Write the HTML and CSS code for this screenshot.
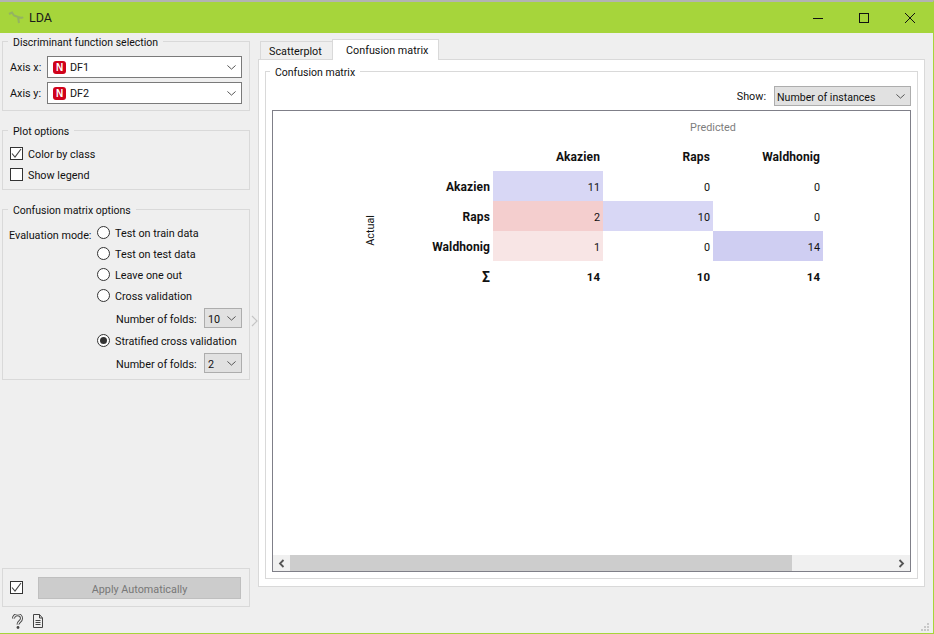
FILE: index.html

```html
<!doctype html>
<html lang="en">

<head>
  <meta charset="utf-8">
  <title>LDA</title>
  <link rel="stylesheet" href="styles.css">
</head>

<body>
  <div class="window">
    <header class="titlebar">
      <svg class="app-icon" width="16" height="14" viewBox="0 0 16 14"><path d="M1 3l3-1.500 2 3 4 1.500 4 1M10 6l1 6M14 7l1-1" fill="none" stroke="#8fa870" stroke-width="2"/></svg>
      <span class="title">LDA</span>
      <svg class="win-btn btn-min" width="12" height="12" viewBox="0 0 12 12"><path d="M1 6.500h10" stroke="#111" fill="none"/></svg>
      <svg class="win-btn btn-max" width="12" height="12" viewBox="0 0 12 12"><rect x="1.500" y="1.500" width="9" height="9" stroke="#111" fill="none"/></svg>
      <svg class="win-btn btn-close" width="12" height="12" viewBox="0 0 12 12"><path d="M1 1l10 10M11 1L1 11" stroke="#111" fill="none"/></svg>
    </header>

    <div class="body">
      <aside class="controls">
        <section class="group group-axes">
          <span class="legend">Discriminant function selection</span>
          <div class="axis-row">
            <span class="axis-label">Axis x:</span>
            <div class="combo combo-white"><span class="var-n">N</span><span>DF1</span><svg class="chev" width="9" height="5" viewBox="0 0 11 6"><path d="M.5.500l5 4.500 5-4.500" fill="none" stroke="#555" stroke-width="1.200"/></svg></div>
          </div>
          <div class="axis-row">
            <span class="axis-label">Axis y:</span>
            <div class="combo combo-white"><span class="var-n">N</span><span>DF2</span><svg class="chev" width="9" height="5" viewBox="0 0 11 6"><path d="M.5.500l5 4.500 5-4.500" fill="none" stroke="#555" stroke-width="1.200"/></svg></div>
          </div>
        </section>

        <section class="group group-plot">
          <span class="legend">Plot options</span>
          <div class="check-row"><span class="check"><svg width="11" height="11" viewBox="0 0 11 11"><path d="M1 5.500l3 3.500 6-8" fill="none" stroke="#444" stroke-width="1.100"/></svg></span>Color by class</div>
          <div class="check-row"><span class="check"></span>Show legend</div>
        </section>

        <section class="group group-matrix">
          <span class="legend">Confusion matrix options</span>
          <div class="eval">
            <span class="eval-label">Evaluation mode:</span>
            <div class="eval-options">
              <div class="radio-row"><span class="radio"></span>Test on train data</div>
              <div class="radio-row"><span class="radio"></span>Test on test data</div>
              <div class="radio-row"><span class="radio"></span>Leave one out</div>
              <div class="radio-row"><span class="radio"></span>Cross validation</div>
              <div class="folds">Number of folds:<div class="combo combo-gray combo-small"><span>10</span><svg class="chev" width="9" height="5" viewBox="0 0 11 6"><path d="M.5.500l5 4.500 5-4.500" fill="none" stroke="#555" stroke-width="1.200"/></svg></div></div>
              <div class="radio-row"><span class="radio radio-on"></span>Stratified cross validation</div>
              <div class="folds">Number of folds:<div class="combo combo-gray combo-small"><span>2</span><svg class="chev" width="9" height="5" viewBox="0 0 11 6"><path d="M.5.500l5 4.500 5-4.500" fill="none" stroke="#555" stroke-width="1.200"/></svg></div></div>
            </div>
          </div>
        </section>

        <div class="spacer"></div>

        <div class="apply-box">
          <span class="check"><svg width="11" height="11" viewBox="0 0 11 11"><path d="M1 5.500l3 3.500 6-8" fill="none" stroke="#444" stroke-width="1.100"/></svg></span>
          <div class="apply-btn">Apply Automatically</div>
        </div>

        <div class="status">
          <svg width="11" height="15" viewBox="0 0 11 15"><path d="M1.500 4.500c0-5 8-5 8 0 0 3-3.500 3-3.500 6" fill="none" stroke="#444" stroke-width="3"/><path d="M1.500 4.500c0-5 8-5 8 0 0 3-3.500 3-3.500 6" fill="none" stroke="#efefef" stroke-width="1.200"/><circle cx="6" cy="13.500" r="1.400" fill="#444"/></svg>
          <svg width="12" height="14" viewBox="0 0 12 14"><path d="M1.500.500h6l3 3.500v9.500h-9zM7.500.500v3.500h3M3.500 6.500h5M3.500 8.500h5M3.500 10.500h5" fill="none" stroke="#444"/></svg>
        </div>
      </aside>

      <div class="splitter"><svg width="7" height="12" viewBox="0 0 7 12"><path d="M1 1l5 5-5 5" fill="none" stroke="#c4c4c4" stroke-width="1.200"/></svg></div>

      <main class="main">
        <div class="tabs">
          <div class="tab">Scatterplot</div>
          <div class="tab tab-active">Confusion matrix</div>
        </div>
        <div class="tab-pane">
          <section class="inner-group">
            <span class="legend">Confusion matrix</span>
            <div class="show-row">
              <span>Show:</span>
              <div class="combo combo-gray combo-show"><span>Number of instances</span><svg class="chev" width="9" height="5" viewBox="0 0 11 6"><path d="M.5.500l5 4.500 5-4.500" fill="none" stroke="#555" stroke-width="1.200"/></svg></div>
            </div>
            <div class="view">
              <div class="matrix">
                <div class="predicted">Predicted</div>
                <div class="actual"><span>Actual</span></div>

                <div class="head head-first">Akazien</div>
                <div class="head">Raps</div>
                <div class="head">Waldhonig</div>

                <div class="row-head">Akazien</div>
                <div class="cell blue-1">11</div>
                <div class="cell">0</div>
                <div class="cell">0</div>

                <div class="row-head">Raps</div>
                <div class="cell red-2">2</div>
                <div class="cell blue-1">10</div>
                <div class="cell">0</div>

                <div class="row-head">Waldhonig</div>
                <div class="cell red-1">1</div>
                <div class="cell">0</div>
                <div class="cell blue-2">14</div>

                <div class="row-head sigma">Σ</div>
                <div class="cell total">14</div>
                <div class="cell total">10</div>
                <div class="cell total">14</div>
              </div>

              <div class="hscroll">
                <svg width="7" height="9" viewBox="0 0 7 9"><path d="M5.500 1l-3.500 3.500 3.500 3.500" fill="none" stroke="#555" stroke-width="1.800"/></svg>
                <div class="track"><div class="thumb"></div></div>
                <svg width="7" height="9" viewBox="0 0 7 9"><path d="M1.500 1l3.500 3.500-3.500 3.500" fill="none" stroke="#555" stroke-width="1.800"/></svg>
              </div>
            </div>
          </section>
        </div>
      </main>
    </div>

    <svg class="grip" width="9" height="9" viewBox="0 0 9 9"><path d="M6 0h2v2H6zM3 3h2v2H3zM6 3h2v2H6zM0 6h2v2H0zM3 6h2v2H3zM6 6h2v2H6z" fill="#c8c8c8"/></svg>
  </div>
</body>

</html>
```

FILE: styles.css

```css
html, body { margin:0; padding:0; height:100%; }
body { font-family:Roboto,"Open Sans",sans-serif; font-size:10.800px; color:#111; background:#efefef; overflow:hidden; }
* { box-sizing:border-box; }

.window { width:934px; height:634px; display:flex; flex-direction:column; position:relative; background:#efefef; border-top:2px solid #b3b3b3; border-right:1px solid #a6d53b; border-bottom:1px solid #a6d53b; }
.grip { position:absolute; right:3px; bottom:1px; }

/* title bar */
.titlebar { height:31px; flex:none; background:#a6d53b; display:flex; align-items:center; padding-left:8px; }
.app-icon { opacity:.75; margin-right:5px; }
.title { font-size:12.500px; color:#1a1a1a; flex:1; }
.win-btn { flex:none; }
.btn-min { margin-right:34px; }
.btn-max { margin-right:34px; }
.btn-close { margin-right:17px; }

.body { flex:1; display:flex; min-height:0; }

/* left column */
.controls { width:250px; flex:none; padding:8px 0 0 2px; display:flex; flex-direction:column; }
.group { border:1px solid #d9d9d9; width:248px; position:relative; flex:none; }
.legend { position:absolute; top:-6px; left:5px; padding:0 5px; font-size:10.500px; line-height:14px; background:#efefef; white-space:nowrap; }

.group-axes { height:70px; padding:14px 0 0 7px; }
.axis-row { display:flex; align-items:center; height:22px; margin-bottom:4px; }
.axis-label { width:37px; flex:none; }
.combo { display:flex; align-items:center; border:1px solid #7a7a7a; position:relative; }
.combo-white { background:#fff; width:195px; height:22px; padding-left:5px; }
.combo-gray { background:#e1e1e1; border-color:#adadad; padding:2px 0 0 3px; }
.combo-small { width:38px; height:20px; }
.combo-show { width:137px; height:20px; padding-left:2px; font-size:10.600px; }
.chev { position:absolute; right:5px; top:50%; margin-top:-2px; }
.var-n { width:13px; height:13px; background:#d0021b; color:#fff; border-radius:3px; font-family:"Liberation Sans",sans-serif; font-size:10px; font-weight:bold; text-align:center; line-height:13px; margin-right:4px; }

.group-plot { height:60px; margin-top:19px; padding:12px 0 0 7px; }
.check-row { display:flex; align-items:center; height:21px; padding-top:2px; }
.check { width:13px; height:13px; border:1px solid #333; background:#fff; flex:none; margin-right:5px; display:flex; align-items:center; justify-content:center; }
.check-row .check { margin-bottom:2px; }

.group-matrix { height:171px; margin-top:19px; padding:12px 0 0 6px; }
.eval { display:flex; }
.eval-label { width:88px; flex:none; padding-top:7px; line-height:14px; }
.eval-options { flex:1; }
.radio-row { display:flex; align-items:center; height:21px; padding-top:2px; }
.radio { width:13px; height:13px; border:1px solid #333; border-radius:50%; background:#fff; margin:0 5px 2px 0; flex:none; position:relative; }
.radio-on::after { content:""; position:absolute; left:2px; top:2px; width:7px; height:7px; border-radius:50%; background:#333; }
.folds { display:flex; align-items:center; justify-content:space-between; height:24px; padding:2px 0 0 19px; width:145px; }
.folds .combo { margin-bottom:2px; }
.spacer { flex:1; }

.apply-box { width:248px; height:39px; flex:none; border:1px solid #d9d9d9; display:flex; align-items:center; padding-left:7px; }
.apply-box .check { margin-right:15px; }
.apply-btn { width:203px; height:22px; background:#cccccc; border:1px solid #bfbfbf; color:#777; text-align:center; line-height:23px; }
.status { height:26px; flex:none; display:flex; align-items:center; padding:2px 0 0 10px; gap:9px; }

.splitter { width:8px; flex:none; display:flex; align-items:center; justify-content:center; padding-bottom:24px; }

/* right column */
.main { flex:1; display:flex; flex-direction:column; padding:6px 8px 46px 0; min-width:0; }
.tabs { display:flex; height:20px; flex:none; padding-left:2px; }
.tab { width:73px; height:18px; margin-top:2px; padding-left:8px; border:1px solid #d9d9d9; border-bottom:none; background:#efefef; line-height:19px; white-space:nowrap; }
.tab-active { width:107px; height:21px; margin-top:0; margin-left:-1px; padding-left:13px; background:#fff; position:relative; z-index:1; line-height:21px; }
.tab-pane { flex:1; display:flex; background:#fff; border:1px solid #d9d9d9; padding:11px 6px 7px 6px; min-height:0; }
.inner-group { flex:1; position:relative; border:1px solid #d9d9d9; padding:14px 6px 0 6px; min-width:0; }
.inner-group .legend { left:4px; background:#fff; }

.show-row { display:flex; justify-content:flex-end; align-items:center; gap:8px; height:20px; }
.view { height:462px; margin-top:4px; border:1px solid #7f7f88; background:#fff; display:flex; flex-direction:column; }

/* matrix */
.matrix { flex:1; display:grid; grid-template-columns:112px 108px 110px 110px 110px; grid-template-rows:30px 30px 30px 30px 30px 30px; align-content:start; justify-content:start; }
.predicted { grid-column:3 / 6; grid-row:1; padding:10px 0 0 110px; text-align:center; color:#7d7d7d; line-height:14px; }
.actual { grid-column:1; grid-row:3 / 7; display:flex; align-items:center; justify-content:flex-end; padding:0 8px 2px 0; }
.actual span { writing-mode:vertical-rl; transform:rotate(180deg); }
.head, .row-head, .cell { display:flex; align-items:center; justify-content:flex-end; padding:2px 3px 0 0; }
.head, .row-head { font-weight:bold; font-size:12px; letter-spacing:.1px; }
.head-first { grid-column:3; }
.row-head { grid-column:2; }
.sigma { font-size:14px; }
.total { font-weight:bold; font-size:11.500px; }
.blue-1 { background:#d8d7f5; }
.blue-2 { background:#cfcef2; }
.red-1 { background:#f8e5e5; }
.red-2 { background:#f4cece; }

/* scrollbar */
.hscroll { height:16px; flex:none; background:#f0f0f0; display:flex; align-items:center; padding:0 5px; }
.track { flex:1; height:16px; padding-left:5px; }
.thumb { width:502px; height:16px; background:#cdcdcd; }
```
